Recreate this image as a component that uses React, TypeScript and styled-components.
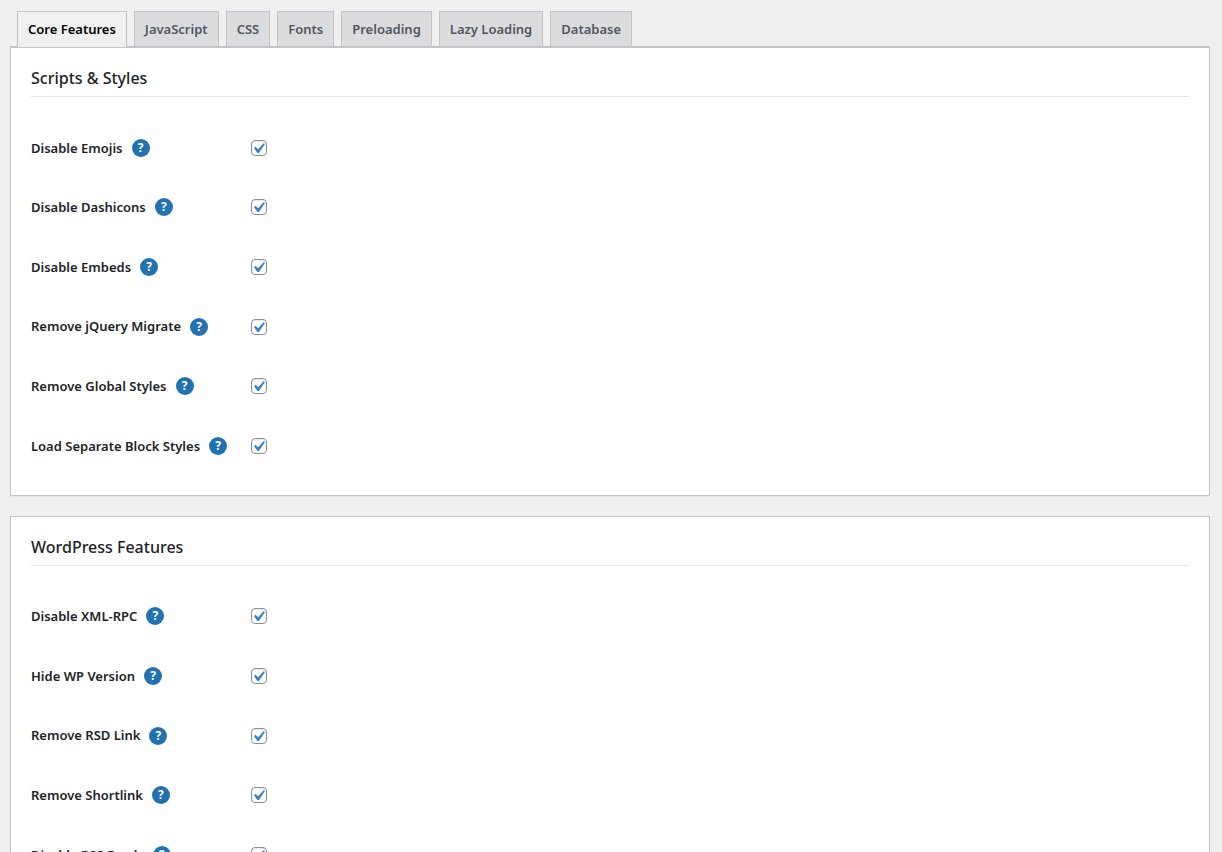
import React, { useState } from "react";
import styled, { createGlobalStyle } from "styled-components";

const GlobalStyle = createGlobalStyle`
  *, *::before, *::after { box-sizing: border-box; }
  html { scrollbar-width: none; }
  body {
    margin: 0;
    background: #efefef;
    color: #1d2327;
    font-family: "Noto Sans", "Open Sans", sans-serif;
    font-size: 14px;
    line-height: 1.4;
  }
`;

const Page = styled.main`
  padding: 11px 12px 20px 10px;
`;

const TabBar = styled.nav`
  display: flex;
  gap: 7px;
  padding: 0 7px;
  border-bottom: 1px solid #c3c4c7;
`;

const Tab = styled.button<{ $active: boolean }>`
  height: ${(p) => (p.$active ? 36 : 35)}px;
  margin: 0 0 ${(p) => (p.$active ? -1 : 0)}px;
  padding: 0 10px ${(p) => (p.$active ? 1 : 0)}px;
  border: 1px solid #c3c4c7;
  border-bottom: 0;
  background: ${(p) => (p.$active ? "#f0f0f1" : "#dcdcde")};
  color: ${(p) => (p.$active ? "#000" : "#50575e")};
  font-family: inherit;
  font-size: 13px;
  font-weight: 600;
  line-height: 24px;
  white-space: nowrap;
  cursor: pointer;
`;

const Panel = styled.section`
  margin-bottom: 20px;
  padding: 20px 20px 19px;
  border: 1px solid #c3c4c7;
  background: #fff;
  box-shadow: 0 1px 1px rgba(0, 0, 0, 0.04);
`;

const PanelTitle = styled.h2`
  margin: 0 0 21px;
  padding-bottom: 8px;
  border-bottom: 1px solid #e2e4e7;
  font-size: 16px;
  font-weight: 500;
  line-height: 20px;
`;

const Row = styled.div`
  display: grid;
  grid-template-columns: 220px 1fr;
  padding: 20px 0;
`;

const LabelCell = styled.div`
  display: flex;
  align-items: center;
  gap: 9px;
  white-space: nowrap;
`;

const OptionLabel = styled.label`
  font-size: 13px;
  font-weight: 600;
`;

const HelpLink = styled.a`
  display: block;
  width: 18px;
  height: 18px;
  border-radius: 50%;
  background: #2271b1;
  color: #fff;
  font-size: 12px;
  font-weight: 700;
  line-height: 18px;
  text-align: center;
  text-decoration: none;
`;

const CheckCell = styled.div`
  display: flex;
  align-items: center;
  min-height: 1lh;
`;

const CheckWrap = styled.span`
  position: relative;
  width: 16px;
  height: 16px;
`;

const CheckInput = styled.input`
  appearance: none;
  display: block;
  width: 16px;
  height: 16px;
  margin: 0;
  border: 1px solid #8c8f94;
  border-radius: 4px;
  background: #fff;
  box-shadow: inset 0 1px 2px rgba(0, 0, 0, 0.1);
`;

const CheckMark = styled.svg`
  position: absolute;
  top: -2px;
  left: -3px;
  width: 21px;
  height: 21px;
  fill: #3582c4;
  pointer-events: none;
`;

const tabs = ["Core Features", "JavaScript", "CSS", "Fonts", "Preloading", "Lazy Loading", "Database"];

const sections = [
  {
    title: "Scripts & Styles",
    options: [
      "Disable Emojis",
      "Disable Dashicons",
      "Disable Embeds",
      "Remove jQuery Migrate",
      "Remove Global Styles",
      "Load Separate Block Styles",
    ],
  },
  {
    title: "WordPress Features",
    options: ["Disable XML-RPC", "Hide WP Version", "Remove RSD Link", "Remove Shortlink", "Disable RSS Feeds"],
  },
];

function Option({ name }: { name: string }) {
  const [checked, setChecked] = useState(true);
  const id = name.toLowerCase().replace(/\s+/g, "-");
  return (
    <Row>
      <LabelCell>
        <OptionLabel htmlFor={id}>{name}</OptionLabel>
        <HelpLink href={`#${id}`} aria-label={`Help: ${name}`}>?</HelpLink>
      </LabelCell>
      <CheckCell>
        <CheckWrap>
          <CheckInput type="checkbox" id={id} checked={checked} onChange={() => setChecked(!checked)} />
          {checked && (
            <CheckMark viewBox="0 0 20 20" aria-hidden="true">
              <path d="M14.83 4.89l1.34.94-5.81 8.38H9.02L5.78 9.67l1.34-1.25 2.57 2.4z" />
            </CheckMark>
          )}
        </CheckWrap>
      </CheckCell>
    </Row>
  );
}

export default function App() {
  const [active, setActive] = useState(tabs[0]);
  return (
    <>
      <GlobalStyle />
      <Page>
        <TabBar>
          {tabs.map((tab) => (
            <Tab key={tab} type="button" $active={tab === active} onClick={() => setActive(tab)}>
              {tab}
            </Tab>
          ))}
        </TabBar>
        {sections.map((section) => (
          <Panel key={section.title}>
            <PanelTitle>{section.title}</PanelTitle>
            {section.options.map((name) => (
              <Option key={name} name={name} />
            ))}
          </Panel>
        ))}
      </Page>
    </>
  );
}
